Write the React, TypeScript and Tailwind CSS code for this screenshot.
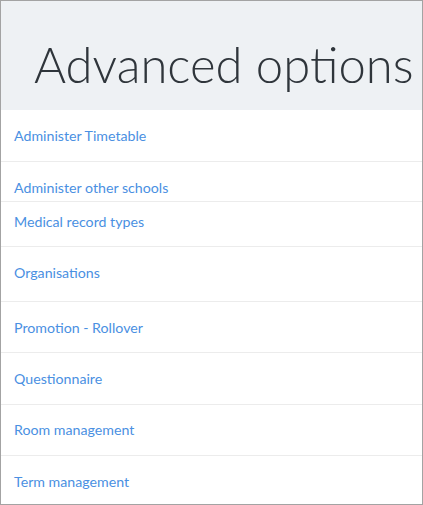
import React from "react";

const rows: { label: string; h: string; pt: string }[] = [
  { label: "Administer Timetable", h: "h-[51px]", pt: "pt-[13px]" },
  { label: "Administer other schools", h: "h-[40px]", pt: "pt-[13px]" },
  { label: "Medical record types", h: "h-[45px]", pt: "pt-[7px]" },
  { label: "Organisations", h: "h-[55px]", pt: "pt-[13px]" },
  { label: "Promotion - Rollover", h: "h-[51px]", pt: "pt-[13px]" },
  { label: "Questionnaire", h: "h-[52px]", pt: "pt-[13px]" },
  { label: "Room management", h: "h-[51px]", pt: "pt-[12px]" },
  { label: "Term management", h: "h-[49px]", pt: "pt-[13px]" },
];

export default function App() {
  return (
    <div
      className="w-[423px] h-[505px] border border-[#a3a3a3] bg-white overflow-hidden"
      style={{ fontFamily: "Lato, 'Open Sans', sans-serif" }}
    >
      <div className="h-[109px] bg-[#eef1f4] pl-[33px] pt-[33px]">
        <h1 className="text-[49px] leading-[60px] font-light text-[#2f353b] whitespace-nowrap">
          Advanced options
        </h1>
      </div>
      {rows.map((r, i) => (
        <div
          key={r.label}
          className={`${r.h} ${r.pt} pl-[13px] ${i > 0 ? "border-t border-[#ececec]" : ""}`}
        >
          <a className="text-[14.2px] leading-[20px] text-[#4a90e2] cursor-pointer">{r.label}</a>
        </div>
      ))}
    </div>
  );
}
